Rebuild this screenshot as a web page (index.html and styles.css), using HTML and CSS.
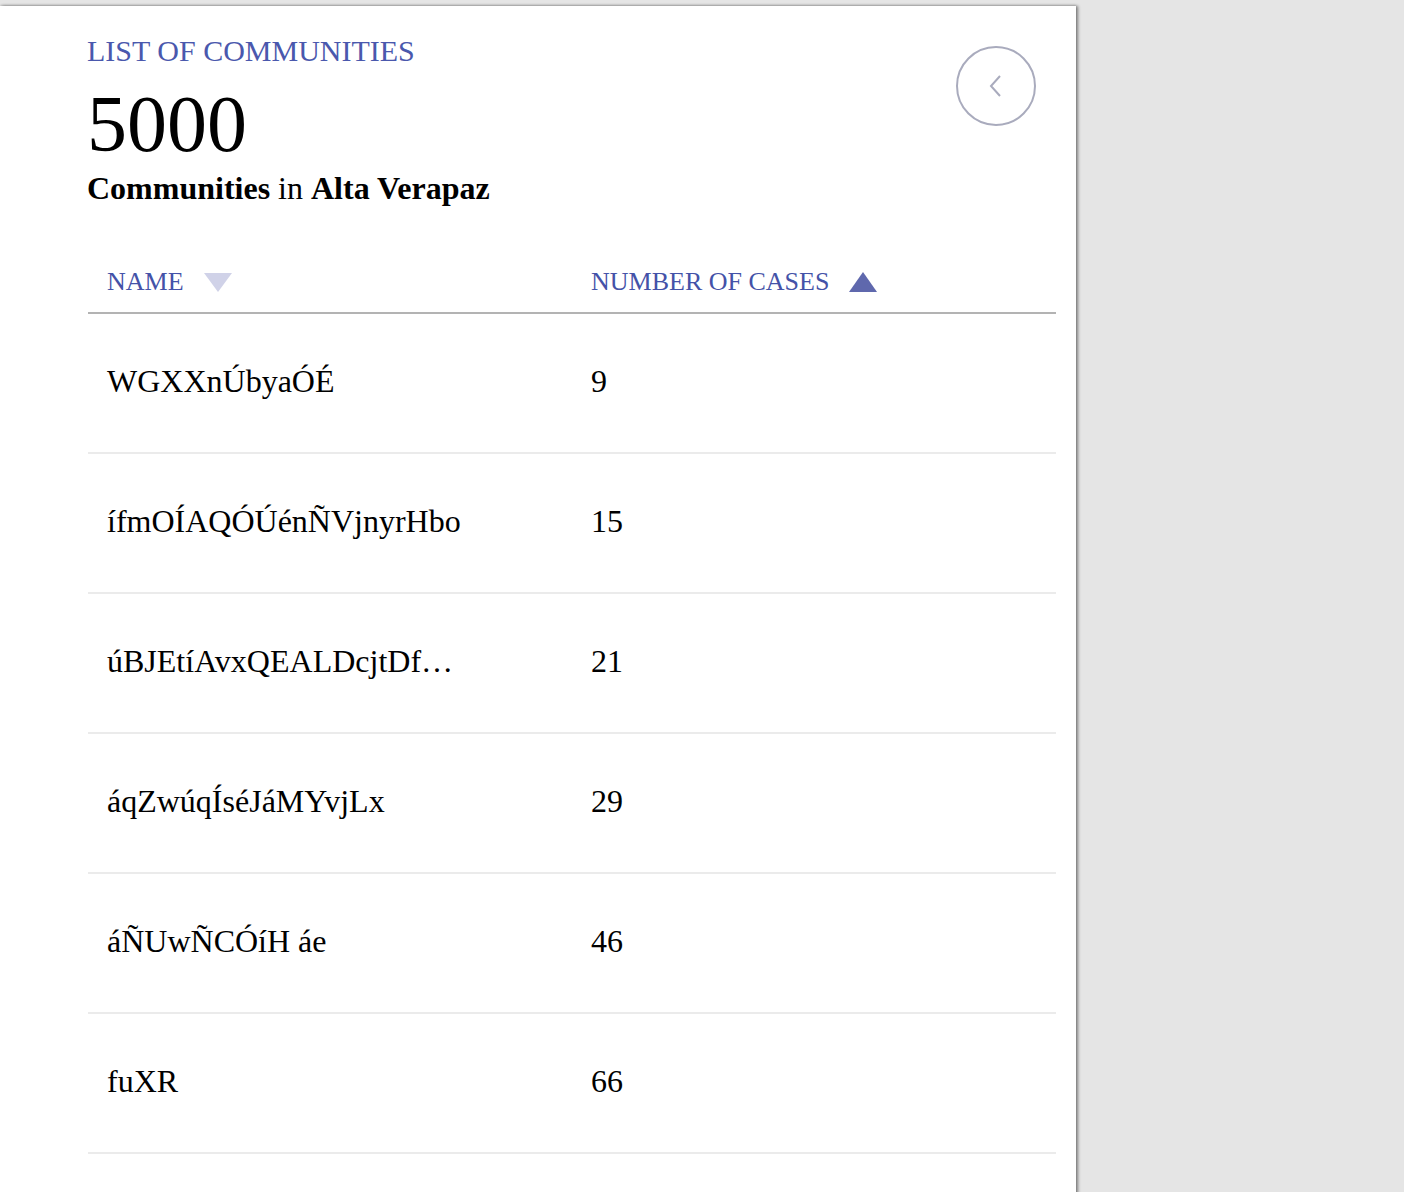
FILE: index.html
```html
<!DOCTYPE html>
<html>
<head>
<meta charset="utf-8">
<link rel="stylesheet" href="styles.css">
</head>
<body>
<div class="panel">
  <header class="head">
    <div class="head-text">
      <div class="kicker">LIST OF COMMUNITIES</div>
      <div class="count">5000</div>
      <div class="sub"><b>Communities</b> in <b>Alta Verapaz</b></div>
    </div>
    <button class="back" aria-label="Back">
      <svg width="16" height="24" viewBox="0 0 16 24"><path d="M12 2 L3 12 L12 22" fill="none" stroke="#a9abbd" stroke-width="2"/></svg>
    </button>
  </header>
  <div class="table">
    <div class="thead">
      <div class="th">NAME <span class="tri tri-down"></span></div>
      <div class="th">NUMBER OF CASES <span class="tri tri-up"></span></div>
    </div>
    <div class="tr"><div class="td">WGXXnÚbyaÓÉ</div><div class="td">9</div></div>
    <div class="tr"><div class="td">ífmOÍAQÓÚénÑVjnyrHbo</div><div class="td">15</div></div>
    <div class="tr"><div class="td">úBJEtíAvxQEALDcjtDf…</div><div class="td">21</div></div>
    <div class="tr"><div class="td">áqZwúqÍséJáMYvjLx</div><div class="td">29</div></div>
    <div class="tr"><div class="td">áÑUwÑCÓíH áe</div><div class="td">46</div></div>
    <div class="tr"><div class="td">fuXR</div><div class="td">66</div></div>
  </div>
</div>
</body>
</html>
```
FILE: styles.css
```css
html, body {
  margin: 0;
  padding: 0;
}
body {
  background: #e5e5e5;
  font-family: "Liberation Serif", "Times New Roman", serif;
  color: #000;
  padding-top: 6px;
  height: 1186px;
  overflow: hidden;
}
.panel {
  width: 1076px;
  height: 1200px;
  background: #fff;
  box-shadow: 2px 0 3px rgba(0,0,0,0.45), 0 -1px 2px rgba(0,0,0,0.12);
  padding: 0 20px 0 88px;
  box-sizing: border-box;
}
.head {
  display: flex;
  justify-content: space-between;
  align-items: flex-start;
}
.head-text {
  padding-top: 28px;
  margin-left: -1px;
}
.kicker {
  font-size: 30px;
  line-height: 34px;
  color: #4a58ad;
}
.count {
  font-size: 80px;
  line-height: 80px;
  margin-top: 16px;
}
.sub {
  font-size: 32px;
  line-height: 36px;
  margin-top: 6px;
}
.back {
  margin: 40px 20px 0 0;
  width: 80px;
  height: 80px;
  border: 2px solid #a9abbd;
  border-radius: 50%;
  background: #fff;
  display: flex;
  align-items: center;
  justify-content: center;
  padding: 0;
}
.table {
  margin-top: 44px;
}
.thead {
  display: grid;
  grid-template-columns: 484px 484px;
  border-bottom: 2px solid #b3b3b3;
  height: 64px;
  box-sizing: border-box;
}
.th {
  padding-left: 19px;
  font-size: 26px;
  color: #4452a8;
  display: flex;
  align-items: center;
  padding-top: 1px;
}
.tri {
  display: inline-block;
  width: 0;
  height: 0;
  margin-left: 20px;
}
.tri-down {
  border-left: 14px solid transparent;
  border-right: 14px solid transparent;
  border-top: 19px solid #d0d2e8;
  margin-top: 2px;
}
.tri-up {
  border-left: 14px solid transparent;
  border-right: 14px solid transparent;
  border-bottom: 20px solid #5f68ad;
}
.tr {
  display: grid;
  grid-template-columns: 484px 484px;
  height: 140px;
  border-bottom: 2px solid #ebebeb;
  box-sizing: border-box;
  align-items: center;
}
.td {
  padding-left: 19px;
  font-size: 32px;
  padding-bottom: 4px;
}
```
